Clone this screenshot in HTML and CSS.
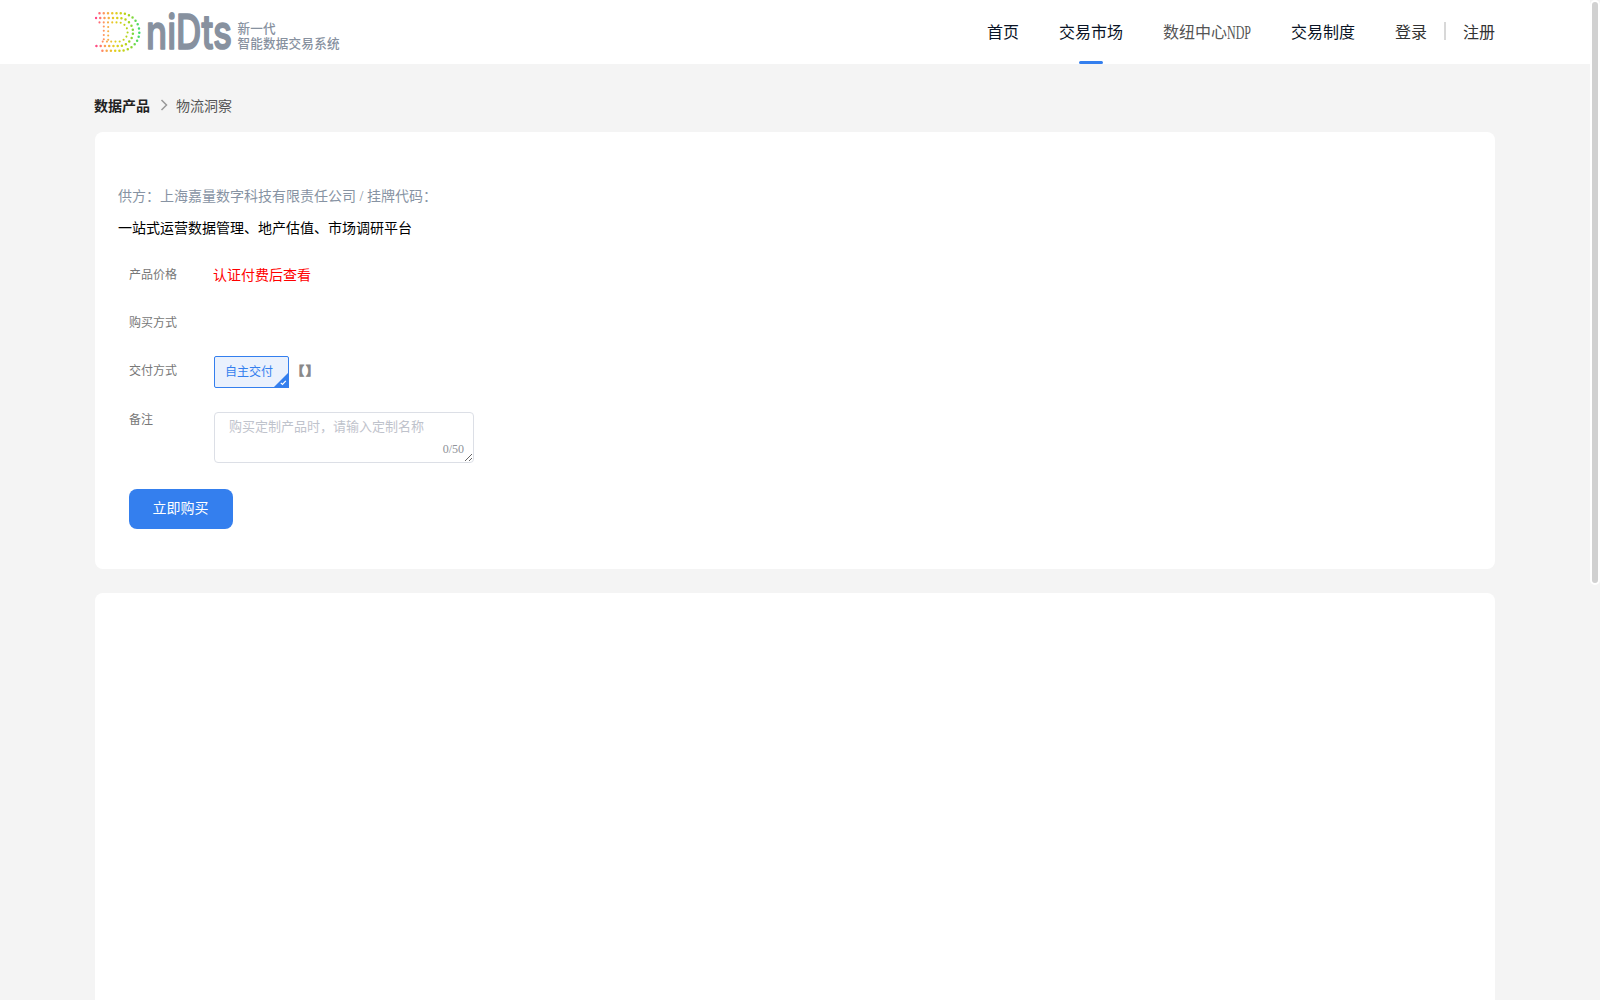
FILE: index.html
```html
<!DOCTYPE html>
<html lang="zh-CN">
<head>
    <meta charset="UTF-8">
    <meta name="viewport" content="width=device-width, initial-scale=1.0">
    <title>物流洞察</title>
    <link rel="stylesheet" href="styles.css">
</head>
<body>
    <header>
        <div class="container header-inner">
            <svg class="logo" width="250" height="64" viewBox="95 0 250 64">
                <defs>
                    <linearGradient id="dots" gradientUnits="userSpaceOnUse" x1="95" y1="0" x2="141" y2="0">
                        <stop offset="0" stop-color="#ff3d8a"/>
                        <stop offset="0.2" stop-color="#ff9a5c"/>
                        <stop offset="0.42" stop-color="#e6cf20"/>
                        <stop offset="0.7" stop-color="#b4d414"/>
                        <stop offset="1" stop-color="#2fdd78"/>
                    </linearGradient>
                </defs>
                <g class="logo-dots">
                    <path class="outer" d="M99.5 13.2H120.5A18.8 18.8 0 0 1 120.5 50.8H99.5"/>
                    <path class="outer" d="M96 18H119A14 14 0 0 1 119 46H96"/>
                    <path d="M99.5 22.4H118A9.6 9.6 0 0 1 118 41.6H99.5"/>
                    <path d="M103.8 26.5V40M108.2 27V40"/>
                </g>
                <text class="logo-name" x="146" y="49" textLength="86" lengthAdjust="spacingAndGlyphs">niDts</text>
                <text class="logo-tag" x="237.5" y="33" textLength="38">新一代</text>
                <text class="logo-tag" x="237.5" y="48" textLength="102">智能数据交易系统</text>
            </svg>
            <nav>
                <a href="#">首页</a>
                <a href="#" class="active">交易市场</a>
                <a href="#" class="light">数纽中心<span class="ndp">NDP</span></a>
                <a href="#">交易制度</a>
                <a href="#" class="user">登录</a>
                <span class="divider"></span>
                <a href="#" class="user">注册</a>
            </nav>
        </div>
    </header>

    <main class="container">
        <div class="breadcrumb">
            <b>数据产品</b>
            <svg width="8" height="12" viewBox="0 0 8 12"><path d="M1.5 1L6.5 6L1.5 11"/></svg>
            <span>物流洞察</span>
        </div>

        <section class="card product">
            <p class="supplier">供方：上海嘉量数字科技有限责任公司 / 挂牌代码：</p>
            <p class="intro">一站式运营数据管理、地产估值、市场调研平台</p>
            <form>
                <div class="row">
                    <label>产品价格</label>
                    <span class="price">认证付费后查看</span>
                </div>
                <div class="row">
                    <label>购买方式</label>
                </div>
                <div class="row">
                    <label>交付方式</label>
                    <span class="option">自主交付
                        <svg width="16" height="16" viewBox="0 0 16 16"><path class="corner" d="M16 0V16H0Z"/><path class="tick" d="M7.8 10.8L9.5 12.5L12.8 8.8"/></svg>
                    </span>
                    <span class="note">【】</span>
                </div>
                <div class="row remark">
                    <label>备注</label>
                    <div class="textarea-box">
                        <textarea placeholder="购买定制产品时，请输入定制名称"></textarea>
                        <span class="count">0/50</span>
                    </div>
                </div>
                <button type="button">立即购买</button>
            </form>
        </section>

        <section class="card detail"></section>
    </main>

    <div class="scrollbar"></div>
</body>
</html>
```
FILE: styles.css
```css
* {
    box-sizing: border-box;
}

body {
    margin: 0;
    width: 1590px;
    height: 1000px;
    overflow: hidden;
    background-color: #f4f4f4;
    font-family: "Liberation Serif", "Noto Sans CJK SC", serif;
    font-size: 14px;
}

a {
    text-decoration: none;
    color: inherit;
}

p {
    margin: 0;
}

.container {
    width: 1400px;
    margin: 0 auto;
}

header {
    height: 64px;
    background-color: #fff;
}

.header-inner {
    display: flex;
    justify-content: space-between;
}

.logo-dots path {
    fill: none;
    stroke: url(#dots);
    stroke-width: 2.1;
    stroke-linecap: round;
    stroke-dasharray: 0 4.25;
}

.logo-dots .outer {
    stroke-width: 2.5;
}

.logo-name {
    font-family: Inter, sans-serif;
    font-size: 48px;
    font-weight: 500;
    fill: #87919f;
    stroke: #87919f;
    stroke-width: 1.6;
    stroke-linejoin: round;
}

.logo-tag {
    font-family: "Noto Sans CJK SC", sans-serif;
    font-size: 12.6px;
    font-weight: 500;
    fill: #87919f;
}

nav {
    display: flex;
    height: 64px;
    line-height: 65px;
    font-size: 16px;
    color: #0a1426;
}

nav a {
    position: relative;
    margin-left: 40px;
    white-space: nowrap;
}

nav .active::after {
    content: "";
    position: absolute;
    left: 20px;
    bottom: 0;
    width: 24px;
    height: 3px;
    border-radius: 2px;
    background-color: #347fee;
}

nav .light {
    color: #555;
}

.ndp {
    display: inline-block;
    width: 24px;
    transform: scale(0.75, 1.15);
    transform-origin: left;
}

nav .user {
    color: #333;
}

.divider {
    width: 2px;
    height: 18px;
    margin: 22px 17px 0;
    background-color: #d8d8d8;
}

.divider + .user {
    margin-left: 0;
}

.breadcrumb {
    display: flex;
    align-items: center;
    height: 68px;
    padding-top: 13px;
    margin-left: -1px;
    color: #555;
}

.breadcrumb b {
    color: #222;
}

.breadcrumb svg {
    margin: 1px 8px 0 10px;
    fill: none;
    stroke: #999;
    stroke-width: 1.5;
}

.card {
    background-color: #fff;
    border-radius: 8px;
}

.product {
    height: 437px;
    padding: 50px 23px 0;
    margin-bottom: 24px;
}

.detail {
    height: 407px;
    border-radius: 8px 8px 0 0;
}

.supplier {
    line-height: 30px;
    color: #8793a3;
}

.intro {
    line-height: 34px;
    color: #000;
}

form {
    padding: 5px 0 0 11px;
}

.row {
    display: flex;
    align-items: center;
    height: 48px;
    color: #777;
    font-size: 12px;
}

.row label {
    width: 85px;
    line-height: 50px;
}

.price {
    margin-top: -3px;
    margin-left: -1px;
    color: #f00;
    font-size: 14px;
}

.option {
    position: relative;
    width: 75px;
    height: 32px;
    margin-top: 1px;
    padding-left: 10px;
    line-height: 31px;
    border: 1px solid #347fee;
    border-radius: 2px;
    background-color: #eaf1fd;
    color: #347fee;
}

.option svg {
    position: absolute;
    right: -1px;
    bottom: -1px;
}

.corner {
    fill: #347fee;
}

.tick {
    fill: none;
    stroke: #fff;
    stroke-width: 1.2;
}

.note {
    margin-left: 3px;
    font-weight: bold;
    letter-spacing: 2px;
    color: #888;
    -webkit-text-stroke: 1px #888;
}

.remark {
    align-items: flex-start;
    height: 94px;
}

.textarea-box {
    position: relative;
    margin-top: 17px;
}

textarea {
    display: block;
    width: 260px;
    height: 51px;
    padding: 4px 14px;
    border: 1px solid #dcdfe6;
    border-radius: 4px;
    outline: none;
    overflow: hidden;
    resize: vertical;
    font-family: inherit;
    font-size: 13px;
    line-height: 20px;
}

textarea::placeholder {
    color: #bfc3cc;
}

.count {
    position: absolute;
    right: 10px;
    bottom: 7px;
    line-height: 14px;
    color: #909399;
}

button {
    display: block;
    width: 104px;
    height: 40px;
    padding: 0 1px 4px 0;
    border: none;
    border-radius: 8px;
    background-color: #347fee;
    color: #fff;
    font-family: inherit;
    font-size: 14px;
}

.scrollbar {
    position: fixed;
    top: 0;
    right: 0;
    width: 10px;
    height: 585px;
    border: 2px solid #fff;
    border-radius: 5px;
    background-color: #d1d1d1;
}
```
